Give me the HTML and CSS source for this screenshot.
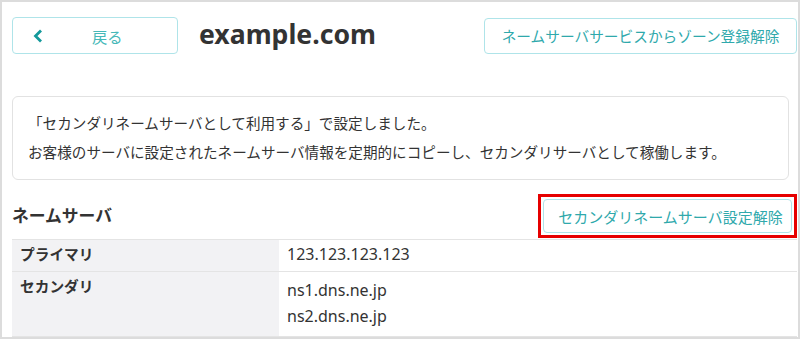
FILE: index.html
```html
<!DOCTYPE html>
<html lang="ja">
<head>
    <meta charset="UTF-8">
    <meta name="viewport" content="width=device-width, initial-scale=1.0">
    <title>example.com - ネームサーバ</title>
    <link rel="stylesheet" href="styles.css">
</head>
<body>
    <div class="frame">
        <div class="top">
            <a href="#" class="btn back">
                <svg class="chevron" width="10" height="14" viewBox="0 0 10 14">
                    <polyline points="8,1.5 2.5,7 8,12.5" fill="none" stroke="#14999b" stroke-width="2.8"/>
                </svg>
                <span>戻る</span>
            </a>
            <h1>example.com</h1>
            <a href="#" class="btn zone">ネームサーバサービスからゾーン登録解除</a>
        </div>

        <div class="notice">
            <p>「セカンダリネームサーバとして利用する」で設定しました。</p>
            <p>お客様のサーバに設定されたネームサーバ情報を定期的にコピーし、セカンダリサーバとして稼働します。</p>
        </div>

        <div class="ns-head">
            <h2>ネームサーバ</h2>
            <div class="highlight">
                <a href="#" class="btn release">セカンダリネームサーバ設定解除</a>
            </div>
        </div>

        <table class="ns-table">
            <tr>
                <th>プライマリ</th>
                <td>123.123.123.123</td>
            </tr>
            <tr>
                <th>セカンダリ</th>
                <td>
                    <ul class="ns-list">
                        <li>ns1.dns.ne.jp</li>
                        <li>ns2.dns.ne.jp</li>
                    </ul>
                </td>
            </tr>
        </table>
    </div>
</body>
</html>
```

FILE: styles.css
```css
* {
    box-sizing: border-box;
    margin: 0;
    padding: 0;
}
body {
    font-family: "Noto Sans", "Noto Sans CJK JP", sans-serif;
    color: #333;
    background-color: #fff;
}
.frame {
    width: 800px;
    height: 339px;
    border: 2px solid #dcdcdc;
    padding: 0 1px 0 10px;
    overflow: hidden;
}
.top {
    display: flex;
    align-items: center;
    padding-top: 15px;
}
.btn {
    display: flex;
    align-items: center;
    justify-content: center;
    border: 1px solid #afe4e9;
    border-radius: 4px;
    background-color: #fff;
    color: #2fa9ac;
    text-decoration: none;
    white-space: nowrap;
}
.back {
    width: 166px;
    height: 37px;
    justify-content: flex-start;
    padding-left: 20px;
    font-size: 15.3px;
    color: #46b8b8;
}
.back span {
    margin-left: 49px;
}
.chevron {
    display: block;
}
h1 {
    margin-left: 21px;
    font-size: 26.6px;
    font-weight: bold;
    color: #333;
    line-height: 1;
    padding-bottom: 2px;
}
.zone {
    margin-left: auto;
    width: 313px;
    height: 36px;
    font-size: 14.7px;
}
.notice {
    margin: 42px 8px 0 0;
    border: 1px solid #e2e2e2;
    border-radius: 6px;
    padding: 12px 15px;
    font-size: 14.6px;
    line-height: 29px;
}
.ns-head {
    display: flex;
    align-items: center;
    justify-content: space-between;
    margin-top: 14px;
}
h2 {
    font-size: 16.8px;
    font-weight: bold;
    padding-bottom: 3px;
}
.highlight {
    border: 3px solid #e60000;
    padding: 2px;
}
.release {
    width: 249px;
    height: 34px;
    font-size: 15px;
    padding-left: 6px;
}
.ns-table {
    width: 100%;
    margin-top: 1px;
    border-collapse: collapse;
    border-top: 1px solid #e4e4e4;
}
.ns-table tr {
    border-bottom: 1px solid #e4e4e4;
}
.ns-table th {
    width: 267px;
    background-color: #f2f2f4;
    text-align: left;
    vertical-align: top;
    font-size: 14.7px;
    font-weight: bold;
    padding: 5px 8px 7px;
    line-height: 19px;
}
.ns-table td {
    vertical-align: top;
    font-size: 16px;
    padding: 5px 8px 7px;
    line-height: 19px;
}
.ns-list {
    list-style: none;
}
.ns-list li {
    line-height: 26px;
}
```
